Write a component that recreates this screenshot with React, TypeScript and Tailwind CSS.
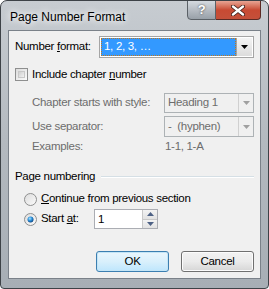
import React from "react"

function ComboArrow({ disabled }: { disabled?: boolean }) {
  return (
    <svg width="7" height="4" viewBox="0 0 7 4">
      <path d="M0 0h7L3.5 4z" fill={disabled ? "#a0a0a0" : "#000"} />
    </svg>
  )
}

function Radio({ checked, label }: { checked?: boolean; label: React.ReactNode }) {
  return (
    <div className="flex items-center gap-[4px] whitespace-nowrap">
      <svg width="13" height="13" viewBox="0 0 13 13" className="shrink-0">
        <defs>
          <linearGradient id={checked ? "rg1" : "rg0"} x1="0" y1="0" x2="1" y2="1">
            <stop offset="0" stopColor="#dcdcdc" />
            <stop offset="1" stopColor="#fbfbfb" />
          </linearGradient>
          <radialGradient id="dot" cx="0.4" cy="0.35" r="0.7">
            <stop offset="0" stopColor="#a8e4ff" />
            <stop offset="0.5" stopColor="#2a8ed8" />
            <stop offset="1" stopColor="#0a3e7a" />
          </radialGradient>
        </defs>
        <circle cx="6.5" cy="6.5" r="6" fill={`url(#${checked ? "rg1" : "rg0"})`} stroke="#8e8f8f" strokeWidth="1" />
        {checked && <circle cx="6.5" cy="6.5" r="3" fill="url(#dot)" />}
      </svg>
      <span>{label}</span>
    </div>
  )
}

export default function App() {
  return (
    <div
      className="w-[269px] h-[289px] overflow-hidden rounded-t-[7px] rounded-b-[4px] border border-[#3d4247] bg-gradient-to-b from-[#c7ccd1] via-[#b3b9bf] to-[#a7aeb5] text-[11.5px] tracking-[-0.3px] text-black whitespace-nowrap"
      style={{ fontFamily: '"Liberation Sans", Arial, sans-serif' }}
    >
      {/* Title bar */}
      <div className="h-[29px] flex items-start justify-between">
        <div className="pl-[9px] pt-[7px] text-[12px] tracking-normal text-black [text-shadow:0_0_6px_#fff,0_0_8px_#fff]">
          Page Number Format
        </div>
        <div className="flex mr-[7px] -mt-[1px]">
          <div className="w-[29px] h-[20px] border border-[#5b6167] rounded-bl-[4px] bg-gradient-to-b from-[#d5dae0] via-[#b6bcc3] to-[#98a0a8] flex items-center justify-center text-white font-bold text-[13px] [text-shadow:0_0_2px_#333]">
            ?
          </div>
          <div className="w-[45px] h-[20px] border border-l-0 border-[#5b2a24] rounded-br-[4px] bg-gradient-to-b from-[#e8a493] via-[#c84a33] to-[#c4503a] flex items-center justify-center">
            <svg width="14" height="11" viewBox="0 0 14 11">
              <path d="M2 1.5l10 8M12 1.5l-10 8" stroke="#3b1c17" strokeWidth="4" strokeLinecap="round" />
              <path d="M2 1.5l10 8M12 1.5l-10 8" stroke="#fff" strokeWidth="2.4" strokeLinecap="round" />
            </svg>
          </div>
        </div>
      </div>

      {/* Client area */}
      <div className="mx-[7px] h-[249px] border border-[#7a8189] bg-[#f0f0f0] px-[6px] pt-[5px]">
        <div className="flex items-center h-[22px]">
          <span>
            Number <u>f</u>ormat:
          </span>
          <div className="ml-auto w-[155px] h-[22px] border border-[#a5a5a5] bg-white flex items-center p-[1px]">
            <div className="flex-1 h-full bg-[#3399ff] text-white pl-[3px] flex items-center outline-1 outline-dotted outline-[#c0781e] -outline-offset-1">
              1, 2, 3, …
            </div>
            <div className="w-[16px] h-full border-l border-[#a5a5a5] bg-gradient-to-b from-[#f4f4f4] to-[#dcdcdc] flex items-center justify-center">
              <ComboArrow />
            </div>
          </div>
        </div>

        <div className="mt-[10px] flex items-center gap-[4px] h-[13px]">
          <div className="w-[13px] h-[13px] border border-[#8e8f8f] bg-gradient-to-br from-[#dcdcdc] to-[#fbfbfb] p-[2px]">
            <div className="w-full h-full border border-[#c8c8c8] bg-gradient-to-br from-[#cfcfcf] to-[#f2f2f2]" />
          </div>
          <span>
            Include chapter <u>n</u>umber
          </span>
        </div>

        <div className="ml-[17px] text-[#6d6d6d]">
          <div className="mt-[12px] flex items-center h-[20px]">
            <span>Chapter starts with style:</span>
            <div className="ml-auto w-[90px] h-[20px] border border-[#adb2b5] flex items-center">
              <span className="flex-1 pl-[3px]">Heading 1</span>
              <div className="w-[15px] h-full border-l border-[#d0d0d0] flex items-center justify-center">
                <ComboArrow disabled />
              </div>
            </div>
          </div>
          <div className="mt-[3px] flex items-center h-[21px]">
            <span>Use separator:</span>
            <div className="ml-auto w-[90px] h-[21px] border border-[#adb2b5] flex items-center">
              <span className="flex-1 pl-[3px] whitespace-pre">-  (hyphen)</span>
              <div className="w-[15px] h-full border-l border-[#d0d0d0] flex items-center justify-center">
                <ComboArrow disabled />
              </div>
            </div>
          </div>
          <div className="mt-[2px] flex items-center h-[16px]">
            <span className="w-[133px]">Examples:</span>
            <span>1-1, 1-A</span>
          </div>
        </div>

        <div className="mt-[14px] flex items-center h-[16px] gap-[6px]">
          <span>Page numbering</span>
          <div className="flex-1 h-[2px] border-t border-[#d5dfe5] border-b border-b-white" />
        </div>

        <div className="ml-[9px]">
          <div className="mt-[6px] h-[16px] flex items-center">
            <Radio label={<><u>C</u>ontinue from previous section</>} />
          </div>
          <div className="mt-[2px] h-[20px] flex items-center">
            <div className="w-[70px]">
              <Radio checked label={<>Start <u>a</u>t:</>} />
            </div>
            <div className="w-[64px] h-[20px] border border-[#abadb3] bg-white flex">
              <span className="flex-1 pl-[3px] leading-[18px]">1</span>
              <div className="w-[15px] flex flex-col border-l border-[#c8c8c8]">
                <div className="flex-1 bg-gradient-to-b from-[#f3f3f3] to-[#e2e2e2] border-b border-[#c8c8c8] flex items-center justify-center">
                  <svg width="7" height="4" viewBox="0 0 7 4"><path d="M0 4h7L3.5 0z" fill="#4d6185" /></svg>
                </div>
                <div className="flex-1 bg-gradient-to-b from-[#f3f3f3] to-[#e2e2e2] flex items-center justify-center">
                  <svg width="7" height="4" viewBox="0 0 7 4"><path d="M0 0h7L3.5 4z" fill="#4d6185" /></svg>
                </div>
              </div>
            </div>
          </div>
        </div>

        <div className="mt-[22px] flex justify-end gap-[12px]">
          <button className="w-[73px] h-[21px] rounded-[3px] border border-[#3c7fb1] bg-gradient-to-b from-[#eaf6fd] via-[#d9f0fc] to-[#bee6fd] shadow-[inset_0_0_0_1px_#c4e5f6]">
            OK
          </button>
          <button className="w-[73px] h-[21px] rounded-[3px] border border-[#707070] bg-gradient-to-b from-[#f2f2f2] via-[#ebebeb] to-[#d6d6d6] shadow-[inset_0_0_0_1px_#fcfcfc]">
            Cancel
          </button>
        </div>
      </div>
    </div>
  )
}
